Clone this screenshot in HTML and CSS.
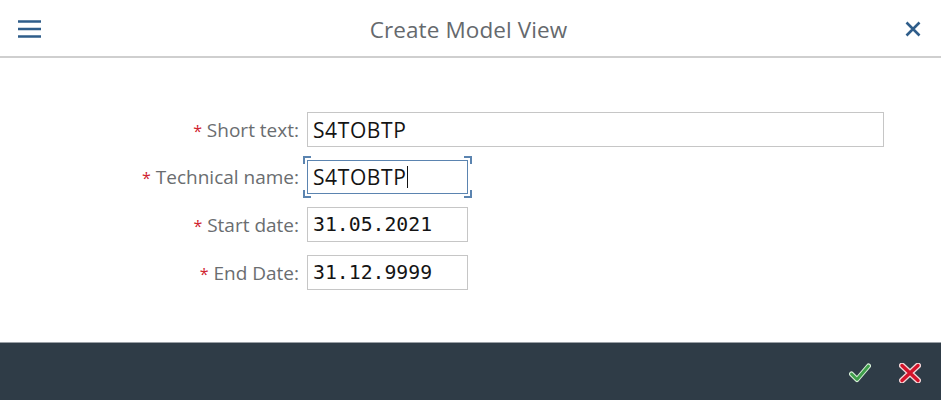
FILE: index.html
```html
<!DOCTYPE html>
<html>
<head>
<meta charset="utf-8">
<link rel="stylesheet" href="styles.css">
</head>
<body>
<div class="dialog">
  <header class="bar">
    <button class="icon-btn menu" aria-label="Menu">
      <svg width="24" height="18" viewBox="0 0 24 18"><path d="M0 1.5H23M0 9H23M0 16.5H23" stroke="#2f5d8a" stroke-width="2.4" fill="none"/></svg>
    </button>
    <h1 class="title">Create Model View</h1>
    <button class="icon-btn close" aria-label="Close">
      <svg width="16" height="16" viewBox="0 0 16 16"><path d="M1.5 1.5L14.5 14.5M14.5 1.5L1.5 14.5" stroke="#2f5d8a" stroke-width="2.6" fill="none"/></svg>
    </button>
  </header>
  <main class="content">
    <form class="form">
      <label class="lbl"><span class="req">*</span> Short text:</label>
      <div class="field"><input class="inp wide sans" value="S4TOBTP"></div>
      <label class="lbl"><span class="req">*</span> Technical name:</label>
      <div class="field"><div class="focus"><span class="c tl"></span><span class="c tr"></span><span class="c bl"></span><span class="c br"></span><div class="inp short sans focused">S4TOBTP<span class="caret"></span></div></div></div>
      <label class="lbl"><span class="req">*</span> Start date:</label>
      <div class="field"><input class="inp short mono" value="31.05.2021"></div>
      <label class="lbl"><span class="req">*</span> End Date:</label>
      <div class="field"><input class="inp short mono" value="31.12.9999"></div>
    </form>
  </main>
  <footer class="foot">
    <button class="icon-btn ok" aria-label="OK">
      <svg width="22" height="20" viewBox="0 0 22 20"><path d="M2.5 11L8 16.5L19.5 3" stroke="#d8efd8" stroke-width="5" fill="none" stroke-linecap="round" stroke-linejoin="round"/><path d="M2.5 11L8 16.5L19.5 3" stroke="#3f9e4a" stroke-width="2.8" fill="none" stroke-linecap="round" stroke-linejoin="round"/></svg>
    </button>
    <button class="icon-btn cancel" aria-label="Cancel">
      <svg width="22" height="20" viewBox="0 0 22 20"><path d="M3 2.5L19 17.5M19 2.5L3 17.5" stroke="#f4d6d8" stroke-width="6" fill="none" stroke-linecap="round"/><path d="M3 2.5L19 17.5M19 2.5L3 17.5" stroke="#d3132a" stroke-width="3.4" fill="none" stroke-linecap="round"/></svg>
    </button>
  </footer>
</div>
</body>
</html>
```
FILE: styles.css
```css
html, body { margin: 0; padding: 0; background: #fff; }
body { font-family: "Open Sans", "Noto Sans", sans-serif; width: 941px; height: 400px; overflow: hidden; }
.dialog { display: flex; flex-direction: column; height: 400px; }
.bar { height: 56px; border-bottom: 2px solid #cfcfcf; display: flex; align-items: center; justify-content: space-between; padding: 0 20px 0 18px; box-sizing: content-box; }
.icon-btn { background: none; border: 0; padding: 0; display: flex; align-items: center; justify-content: center; cursor: pointer; }
.menu { width: 24px; height: 18px; margin-top: 1px; }
.close { width: 16px; height: 16px; margin-top: 1px; }
.title { margin: 0; font-weight: 400; font-size: 22.5px; color: #65696d; letter-spacing: 0.1px; position: relative; left: -5px; top: 1px; }
.content { flex: 1; }
.form { display: grid; grid-template-columns: 299px auto; column-gap: 8px; row-gap: 13px; padding-top: 54px; align-items: center; }
.lbl { text-align: right; font-size: 19px; color: #6a6d70; font-family: "Open Sans", sans-serif; white-space: nowrap; }
.req { color: #d0232f; font-size: 16px; }
.field { display: flex; align-items: center; }
.inp { box-sizing: border-box; height: 35px; border: 1px solid #c6c6c6; background: #fff; padding: 0 5px; color: #141414; outline: none; display: flex; align-items: center; }
.wide { width: 577px; }
.short { width: 161px; }
.sans { font-family: "Open Sans", sans-serif; font-size: 21px; letter-spacing: 0.6px; }
.mono { font-family: "DejaVu Sans Mono", monospace; font-size: 19.8px; }
.focus { position: relative; }
.focused { border: 1px solid #5b84b0; height: 34px; padding-left: 5px; }
.caret { display: inline-block; width: 1px; height: 22px; background: #111; margin-left: 1px; }
.c { position: absolute; width: 6px; height: 6px; border-color: #5b84b0; border-style: solid; border-width: 0; }
.tl { left: -4px; top: -4px; border-left-width: 2px; border-top-width: 2px; }
.tr { right: -4px; top: -4px; border-right-width: 2px; border-top-width: 2px; }
.bl { left: -4px; bottom: -4px; border-left-width: 2px; border-bottom-width: 2px; }
.br { right: -4px; bottom: -4px; border-right-width: 2px; border-bottom-width: 2px; }
.foot { height: 57px; background: #2f3c47; border-top: 1px solid #9aa0a6; display: flex; align-items: center; justify-content: flex-end; gap: 28px; padding-right: 20px; }
.ok, .cancel { width: 22px; height: 20px; margin-top: 3px; }
```
